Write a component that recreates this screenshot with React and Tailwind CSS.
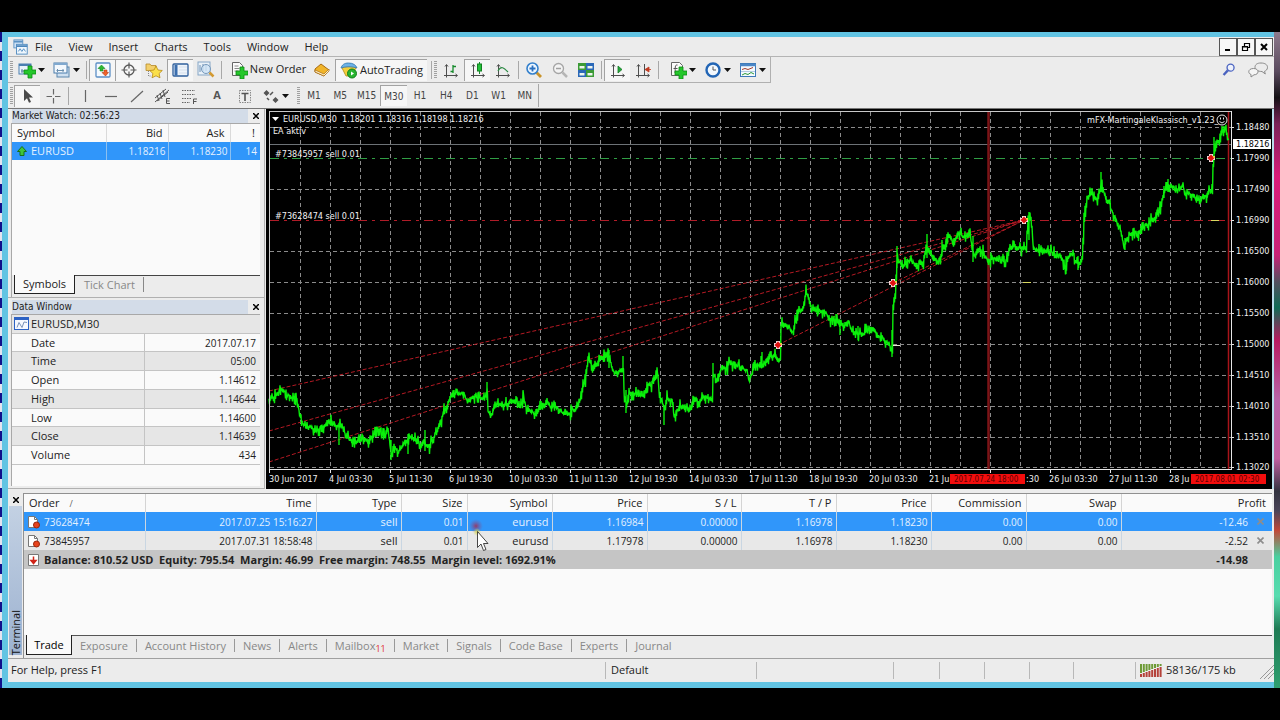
import React from "react";

/* ---------- price data ---------- */

const KEYS = [
  [269, 399], [276, 393], [282, 391], [287, 395], [293, 401], [297, 400], [299, 413], [302, 422], [308, 427], [318, 431],
  [330, 423], [338, 426], [342, 423], [345, 436], [353, 441], [360, 438], [368, 439], [377, 429], [383, 434], [388, 429],
  [391, 455], [394, 447], [398, 454], [402, 448], [408, 440], [415, 437], [422, 445], [430, 445], [433, 440], [438, 427],
  [443, 412], [450, 396], [455, 393], [463, 394], [468, 398], [480, 395], [485, 398], [487, 392], [488, 414], [491, 415],
  [495, 403], [505, 407], [513, 403], [522, 405], [523, 397], [527, 414], [535, 414], [542, 403], [550, 407], [560, 410],
  [565, 415], [572, 410], [578, 407], [580, 399], [585, 380], [588, 359], [592, 367], [597, 364], [600, 359], [605, 357],
  [608, 352], [612, 367], [615, 374], [621, 371], [623, 368], [624, 396], [626, 408], [628, 397], [637, 395], [643, 396],
  [647, 386], [653, 383], [657, 374], [659, 396], [662, 407], [665, 410], [667, 398], [672, 403], [674, 415], [680, 405],
  [688, 408], [700, 400], [703, 395], [712, 397], [713, 370], [717, 376], [722, 366], [733, 362], [740, 367], [746, 370],
  [749, 382], [753, 369], [762, 364], [770, 356], [775, 355], [780, 360], [781, 327], [785, 324], [793, 331], [798, 308],
  [802, 312], [806, 294], [812, 306], [823, 312], [835, 322], [840, 326], [848, 323], [853, 332], [863, 334], [868, 327],
  [875, 333], [880, 338], [887, 343], [890, 343], [892, 354], [893, 307], [895, 298], [897, 252], [898, 260], [903, 267],
  [910, 263], [917, 266], [923, 263], [926, 253], [928, 252], [938, 258], [943, 248], [948, 233], [953, 240], [960, 233],
  [963, 238], [970, 238], [973, 258], [978, 250], [983, 252], [990, 261], [997, 257], [1005, 260], [1010, 249], [1015, 243],
  [1020, 247], [1026, 248], [1028, 218], [1031, 222], [1033, 246], [1043, 251], [1053, 253], [1060, 258], [1065, 266],
  [1068, 256], [1073, 254], [1077, 264], [1082, 261], [1084, 221], [1087, 198], [1092, 191], [1097, 203], [1100, 191],
  [1101, 184], [1103, 190], [1108, 201], [1115, 218], [1120, 228], [1124, 246], [1130, 231], [1137, 235], [1145, 230],
  [1152, 223], [1160, 210], [1164, 195], [1168, 184], [1173, 188], [1182, 187], [1187, 195], [1193, 198], [1200, 200],
  [1207, 200], [1212, 188], [1213, 161], [1215, 143], [1218, 143], [1222, 132], [1225, 130], [1229, 143],
];

const SPIKES = [
  [339, 423, 445], [408, 434, 454], [487, 382, 400], [523, 394, 404], [425, 430, 451], [609, 350, 368], [623, 356, 372], [626, 390, 413],
  [664, 405, 425], [713, 363, 378], [762, 352, 368], [761, 356, 368], [892, 330, 357], [897, 246, 268], [927, 234, 258],
  [836, 314, 326], [840, 320, 335], [858, 326, 340], [942, 240, 256], [1029, 212, 240], [1101, 172, 192], [1066, 256, 274],
  [1078, 256, 270], [1164, 186, 198], [1168, 179, 192], [1214, 137, 160], [1125, 238, 250], [973, 236, 262], [391, 440, 460],
];

function buildSeries() {
  let seed = 11;
  const rnd = () => {
    seed = (seed * 1103515245 + 12345) % 2147483648;
    return seed / 2147483648;
  };
  const pts = [];
  let drift = 0;
  for (let i = 0; i < KEYS.length - 1; i++) {
    const [x0, y0] = KEYS[i];
    const [x1, y1] = KEYS[i + 1];
    for (let x = x0; x < x1; x++) {
      drift = drift * 0.7 + (rnd() - 0.5) * 4;
      const y = y0 + ((y1 - y0) * (x - x0)) / (x1 - x0) + drift;
      const up = 0.5 + rnd() ** 3 * 7;
      const down = 0.5 + rnd() ** 3 * 7;
      pts.push(`${x} ${(y - up).toFixed(1)}`, `${x + 0.5} ${(y + down).toFixed(1)}`);
    }
  }
  return "M" + pts.join("L") + SPIKES.map(([x, a, b]) => `M${x} ${a}V${b}`).join("");
}

const SERIES = buildSeries();
const range = (n) => Array.from({ length: n }, (_, i) => i);

const PRICES = ["1.18480", "1.17990", "1.17490", "1.16990", "1.16500", "1.16000", "1.15500", "1.15000", "1.14510", "1.14010", "1.13510", "1.13020"];
const DATES = [
  "30 Jun 2017", "4 Jul 03:30", "5 Jul 11:30", "6 Jul 19:30", "10 Jul 03:30", "11 Jul 11:30", "12 Jul 19:30", "14 Jul 03:30",
  "17 Jul 11:30", "18 Jul 19:30", "20 Jul 03:30", "21 Ju", "", "26 Jul 03:30", "27 Jul 11:30", "28 Ju",
];

function Marker({ x, y }) {
  return (
    <g>
      <path d={`M${x - 4} ${y - 2}h2v-2h4v2h2v4h-2v2h-4v-2h-2z`} fill="#f4dcdc" />
      <path d={`M${x - 3.5} ${y}l3.500 -3.500l3.500 3.500l-3.500 3.500z`} fill="#e01010" />
      <circle cx={x + 3} cy={y - 1} r="1" fill="#f3c020" />
    </g>
  );
}

function Chart() {
  return (
    <svg
      viewBox="266 109 1006 380"
      preserveAspectRatio="xMinYMin meet"
      className="block h-auto w-full font-['DejaVu_Sans_Condensed',sans-serif] text-[9px]"
      role="img"
      aria-label="EURUSD,M30"
    >
      <rect x="266" y="109" width="1006" height="380" fill="#000" />
      <g stroke="#8b8b8b" strokeWidth="1" strokeDasharray="4 3" shapeRendering="crispEdges">
        {range(31).map((i) => <path key={i} d={`M${300.5 + i * 30} 112V469`} />)}
        {range(12).map((i) => <path key={i} d={`M270 ${Math.round(127 + i * 30.95) + 0.5}H1231`} />)}
      </g>
      <path d="M270 144.500H1231" stroke="#6d7276" shapeRendering="crispEdges" />
      <path d="M270 158.500H1231" stroke="#000" strokeWidth="1" shapeRendering="crispEdges" />
      <path d="M270 158.500H1231" stroke="#2f9e44" strokeWidth="1" strokeDasharray="9 5 3 5" shapeRendering="crispEdges" />
      <path d="M270 220.500H1231" stroke="#000" strokeWidth="1" shapeRendering="crispEdges" />
      <path d="M270 220.500H1231" stroke="#b01c28" strokeWidth="1" strokeDasharray="9 5 3 5" shapeRendering="crispEdges" />
      <path d="M988.500 112V469" stroke="#7d1417" strokeWidth="2.500" />
      <path d="M1228.500 112V469" stroke="#a8141a" strokeWidth="1.500" />
      <g stroke="#b51a24" strokeWidth="1" strokeDasharray="4 2" fill="none">
        <path d="M269 391L1024 220" />
        <path d="M269 431L1024 220" />
        <path d="M269 462L1024 220" />
        <path d="M778 345L1024 220" />
        <path d="M893 283L1024 220" />
      </g>
      <path d={SERIES} stroke="#0af00a" strokeWidth="1.400" fill="none" />
      <path d="M1023 282.500h8M1211 220.500h8" stroke="#d8d860" />
      <path d="M893 345.500h7" stroke="#e8e8d0" />
      <Marker x={778} y={345} />
      <Marker x={893} y={283} />
      <Marker x={1024} y={220} />
      <Marker x={1211} y={158} />
      <path d="M269.500 469V111.500H1231.500" stroke="#c8c8c8" fill="none" shapeRendering="crispEdges" />
      <path d="M269 469.500H1231.500V111" stroke="#e6e6e6" fill="none" shapeRendering="crispEdges" />
      <path d="M272 117h7l-3.500 4z" fill="#fff" />
      <g fill="#f2f2f2">
        <text x="283" y="122" xmlSpace="preserve">EURUSD,M30  1.18201 1.18316 1.18198 1.18216</text>
        <text x="273" y="134">EA aktiv</text>
        <text x="275" y="157">#73845957 sell 0.01</text>
        <text x="275" y="219">#73628474 sell 0.01</text>
        <text x="1087" y="123">mFX-MartingaleKlassisch_v1.23_</text>
      </g>
      <g stroke="#e8e8e8" fill="none">
        <circle cx="1222" cy="120" r="5" />
        <path d="M1219.500 121.500q2.500 3 5 0" />
        <path d="M1220.500 117.500v2M1223.500 117.500v2" />
      </g>
      <g fill="#f0f0f0">
        {PRICES.map((p, i) => <text key={p} x="1236" y={Math.round(130 + i * 30.95)}>{p}</text>)}
      </g>
      <g stroke="#e6e6e6" shapeRendering="crispEdges">
        {range(12).map((i) => <path key={i} d={`M1231 ${Math.round(127 + i * 30.95) + 0.5}h3`} />)}
        {range(16).map((i) => <path key={i} d={`M${(i === 0 ? 269.5 : 270.5 + i * 60)} 469v4`} />)}
      </g>
      <rect x="1233" y="139" width="38" height="10" fill="#fff" />
      <text x="1236" y="147" fill="#000">1.18216</text>
      <g fill="#f0f0f0">
        {DATES.map((d, i) => d && <text key={d} x={269 + i * 60} y="482">{d}</text>)}
        <text x="1026" y="482">:30</text>
      </g>
      <rect x="950" y="474" width="75" height="10" fill="#f20d0d" />
      <rect x="1191" y="474" width="75" height="10" fill="#f20d0d" />
      <g fill="#5c0000" className="text-[8px]">
        <text x="954" y="482">2017.07.24 18:00</text>
        <text x="1195" y="482">2017.08.01 02:30</text>
      </g>
    </svg>
  );
}

/* ---------- icons ---------- */

function Icon({ children, w = 18, h = 18, box = "0 0 18 18" }) {
  return <svg width={w} height={h} viewBox={box} fill="none" aria-hidden="true" className="shrink-0">{children}</svg>;
}

const Plus = ({ x = 6, y = 6 }) => (
  <path d={`M${x + 4} ${y}h4v4h4v4h-4v4h-4v-4h-4v-4h4z`} fill="#25c72b" stroke="#0c8a14" strokeWidth="0.8" />
);
const Axes = () => <path d="M4.500 4v12.500M2 14.500h13M3 5.500l1.500-2l1.500 2M13.500 13l2 1.500l-2 1.500" stroke="#4d4d4d" />;

const icons = {
  app: (
    <Icon w={16} h={16}>
      <rect x="1" y="1" width="10" height="9" fill="#cfe2f5" stroke="#5c93c4" />
      <path d="M1 3h10" stroke="#5c93c4" strokeWidth="2" />
      <rect x="4" y="6" width="12" height="11" fill="#eef6fd" stroke="#4b87bd" />
      <path d="M4 8h12" stroke="#4b87bd" strokeWidth="2" />
      <path d="M6 14l2-3l2 3l2-3l2 3" stroke="#4b87bd" />
    </Icon>
  ),
  newChart: (
    <Icon>
      <rect x="1" y="3" width="12" height="10" fill="#e8f2fb" stroke="#4a7fb0" />
      <path d="M1 4h12" stroke="#4a7fb0" strokeWidth="2" />
      <path d="M3 10h3M4 8v4" stroke="#587ea0" />
      <Plus x={6} y={5} />
    </Icon>
  ),
  profiles: (
    <Icon>
      <rect x="4" y="6" width="12" height="10" fill="#cfe0f0" stroke="#5a86ad" />
      <rect x="1" y="2" width="13" height="10" fill="#f3f8fd" stroke="#4a7cab" />
      <path d="M1 3h13" stroke="#7fa8cf" strokeWidth="2" />
      <path d="M3.500 9.500h7.500M4.500 8v3M10 8v3" stroke="#6b8fae" />
    </Icon>
  ),
  market: (
    <Icon>
      <rect x="2" y="2" width="14" height="14" rx="1" fill="#f5faff" stroke="#5b8fc5" strokeWidth="1.300" />
      <path d="M4 7.500L7.500 4L11 7.500H9V10H6V7.500z" fill="#2fb832" stroke="#168a1c" strokeWidth=".6" />
      <path d="M8 11.500h2V9h3v2.500h1.500L11.500 15z" fill="#f0632a" stroke="#b43a10" strokeWidth=".6" />
    </Icon>
  ),
  target: (
    <Icon>
      <circle cx="9" cy="9" r="5" stroke="#5a5a5a" strokeWidth="1.300" />
      <path d="M9 1.500v6M9 10.500v6M1.500 9h6M10.500 9h6" stroke="#5a5a5a" strokeWidth="1.200" />
    </Icon>
  ),
  navigator: (
    <Icon>
      <path d="M1 3h4l1 1.500h5v5H1z" fill="#f3cf6b" stroke="#b58a2a" strokeWidth=".8" />
      <path d="M3.500 10v5h3" stroke="#888" strokeDasharray="1 1" />
      <path d="M11 5l2 4l4.300.500l-3.200 3l.9 4.300L11 14.800L7 16.800l.9-4.300l-3.200-3L9 9z" fill="#fbe04a" stroke="#b88a15" strokeWidth=".8" />
    </Icon>
  ),
  terminal: (
    <Icon>
      <rect x="1" y="3" width="15" height="12" rx="1" fill="#eef4fb" stroke="#2f5f9c" strokeWidth="1.300" />
      <path d="M4 4v10.500" stroke="#3b6eae" strokeWidth="3" />
      <path d="M7 6h8M7 9h8M7 12h8" stroke="#d5dfeb" />
    </Icon>
  ),
  tester: (
    <Icon>
      <rect x="1" y="1" width="12" height="13" fill="#e9f1f8" stroke="#86a6c6" />
      <path d="M3 4v7M6 3v8M9 4v6" stroke="#6a8fb5" />
      <circle cx="9" cy="8" r="4.500" fill="#cfe4f5" fillOpacity=".8" stroke="#7698bb" />
      <path d="M12.500 11.500l4 4" stroke="#d39a32" strokeWidth="2.500" />
    </Icon>
  ),
  order: (
    <Icon>
      <path d="M2.500 1.500h7l3 3v10h-10z" fill="#fbfbfb" stroke="#666" />
      <path d="M4.500 5h4M4.500 7.500h5M4.500 10h4" stroke="#888" />
      <Plus x={6} y={6} />
    </Icon>
  ),
  book: (
    <Icon>
      <path d="M2 8l6-5l8 6l-5 6l-9-4z" fill="#f0b429" stroke="#a86a10" />
      <path d="M2 9l9 4l5-5v2l-5 5l-9-4z" fill="#fff1c9" stroke="#a86a10" strokeWidth=".7" />
    </Icon>
  ),
  auto: (
    <Icon>
      <path d="M2 7c3-2 11-2 14 0l-5 8H6z" fill="#f3cf3c" stroke="#b08a18" strokeWidth=".8" />
      <path d="M1 7c1-3 3-5 7.500-5S16 4 17 7c-4-1.600-12-1.600-16 0z" fill="#6cb2e6" stroke="#3277ae" strokeWidth=".8" />
      <circle cx="12" cy="12.500" r="4.500" fill="#28b431" stroke="#128018" />
      <path d="M11 10.500v4l3-2z" fill="#fff" />
    </Icon>
  ),
  bars: <Icon><Axes /><path d="M11 4v8M11 5.500h3M8.500 10.500H11" stroke="#168a2c" strokeWidth="1.300" /></Icon>,
  candles: <Icon><Axes /><path d="M10.500 1v12" stroke="#168a2c" /><rect x="8.500" y="3" width="4" height="7" fill="#25c23a" stroke="#138022" /></Icon>,
  line: <Icon><Axes /><path d="M4 10c3-6 6-3 10 1" stroke="#2c8a44" strokeWidth="1.200" /></Icon>,
  zoomIn: (
    <Icon>
      <path d="M11.500 11.500l4.500 4.500" stroke="#c9932b" strokeWidth="2.800" />
      <circle cx="7.500" cy="7.500" r="5.500" fill="#eef7ff" stroke="#3480cc" strokeWidth="1.600" />
      <path d="M4.500 7.500h6M7.500 4.500v6" stroke="#2a70c0" strokeWidth="1.800" />
    </Icon>
  ),
  zoomOut: (
    <Icon>
      <path d="M11.500 11.500l4.500 4.500" stroke="#b5b5b5" strokeWidth="2.500" />
      <circle cx="7.500" cy="7.500" r="5" fill="#f3f3f3" stroke="#a5a5a5" strokeWidth="1.300" />
      <path d="M5 7.500h5" stroke="#a0a0a0" strokeWidth="1.500" />
    </Icon>
  ),
  tile: (
    <Icon>
      <rect x="1" y="2" width="8" height="7" fill="#3b9b36" /><rect x="9" y="2" width="8" height="7" fill="#2a68b8" />
      <rect x="1" y="9" width="8" height="7" fill="#2a68b8" /><rect x="9" y="9" width="8" height="7" fill="#3b9b36" />
      <path d="M2.500 5h5v2.500h-5zM10.500 5h5v2.500h-5zM2.500 12h5v2.500h-5zM10.500 12h5v2.500h-5z" fill="#eef5ee" />
    </Icon>
  ),
  scroll: <Icon><Axes /><path d="M9 5v7l4-3.500z" fill="#25a83a" stroke="#177a28" strokeWidth=".8" /></Icon>,
  shift: <Icon><Axes /><path d="M10.500 3v11" stroke="#4d4d4d" /><path d="M15 6v5l-4-2.500zM14 8.500h3" fill="#c23a20" stroke="#c23a20" strokeWidth=".8" /></Icon>,
  indicators: (
    <Icon>
      <path d="M2.500 1.500h8l3 3v10h-11z" fill="#fbfbfb" stroke="#666" />
      <path d="M8.500 4c-3-.5-2 3-2.500 8M4.500 7.500h4" stroke="#555" />
      <Plus x={6} y={6} />
    </Icon>
  ),
  clock: (
    <Icon>
      <circle cx="9" cy="9" r="6.500" fill="#f2f8fe" stroke="#2265b5" strokeWidth="2.400" />
      <path d="M9 5.500V9h3" stroke="#555" />
    </Icon>
  ),
  template: (
    <Icon>
      <rect x="1.500" y="2.500" width="15" height="13" fill="#f5faff" stroke="#3d79b8" />
      <path d="M1 4h16" stroke="#4a86c6" strokeWidth="2.500" />
      <path d="M3 8.500l3-1l3 1l5-2" stroke="#a23b2b" />
      <path d="M2 10.500h14" stroke="#9ab8d4" strokeWidth=".7" />
      <path d="M3 14l3-1.500l3 1l3-2l3 1.500" stroke="#2c9a3a" />
    </Icon>
  ),
  cursor: <Icon><path d="M5 2v12l3-2.800l2 4.600l2-.9l-2-4.500h4z" fill="#4a4a4a" /></Icon>,
  cross: <Icon><path d="M9.500 2v5.500M9.500 11v5.500M2.500 9.500H8M11 9.500h5.500" stroke="#666" strokeWidth="1.200" /></Icon>,
  vline: <Icon><path d="M9.500 3v12" stroke="#666" strokeWidth="1.200" /></Icon>,
  hline: <Icon><path d="M3 9.500h12" stroke="#666" strokeWidth="1.200" /></Icon>,
  trend: <Icon><path d="M3 15L15 4" stroke="#666" strokeWidth="1.200" /></Icon>,
  channel: (
    <Icon>
      <path d="M1 11L12 2M3 14L14 5M3 8l2 6M6 6l2 6M9 3l2 7M1 15L15 3" stroke="#555" />
      <path d="M16 11.500h-3.500v5H16M12.500 14h3" stroke="#555" />
    </Icon>
  ),
  fibo: (
    <Icon>
      <path d="M2 3.500h13M2 7.500h13M2 11.500h9M2 15.500h8" stroke="#666" strokeDasharray="1.500 1" />
      <path d="M13.500 17v-5H17M13.500 14.500h3" stroke="#555" />
    </Icon>
  ),
  label: (
    <Icon>
      <rect x="3.500" y="3.500" width="11" height="12" stroke="#888" strokeDasharray="1.500 1" />
      <path d="M5.500 6.500h7M9 6.500v7.500" stroke="#555" strokeWidth="1.600" />
    </Icon>
  ),
  arrows: (
    <Icon>
      <path d="M4.500 3l3 3l-3 3l-3-3zM13.500 10l3 3l-3 3l-3-3z" fill="#555" />
      <path d="M5 11l2 2M11 5l-3 3" stroke="#555" strokeWidth="1.500" />
    </Icon>
  ),
  search: (
    <Icon w={14} h={14}>
      <circle cx="11" cy="6" r="4.500" fill="#edf1fb" stroke="#4a63c0" strokeWidth="1.700" />
      <path d="M7.500 9.500L2 15.500" stroke="#4a63c0" strokeWidth="3" />
    </Icon>
  ),
  chat: (
    <Icon w={20} h={16} box="0 0 20 16">
      <path d="M13 1c4 0 6.500 1.800 6.500 4.300S17.500 9 16.500 9.300l.8 2.700l-3.300-2.500C10 9.500 7 8 7 5.300S9 1 13 1z" fill="#ececec" stroke="#8a8a8a" />
      <path d="M5.500 6.500C8.500 6.500 10 8 10 9.700S8.500 12.800 6 12.800L3 15v-2.600C1.500 12 .8 11 .8 9.700C.8 8 2.500 6.500 5.500 6.500z" fill="#f5f5f5" stroke="#8a8a8a" />
    </Icon>
  ),
  up: (
    <Icon w={10} h={10} box="0 0 10 10">
      <path d="M5 .5L9.500 5.500H7v4H3v-4H.5z" fill="#3fc63a" stroke="#17701a" />
    </Icon>
  ),
  dataChart: (
    <Icon w={15} h={13} box="0 0 15 13">
      <rect x=".5" y=".5" width="14" height="12" fill="#f5f8ff" stroke="#2c62c4" />
      <path d="M0 1.500h15" stroke="#2c62c4" strokeWidth="3" />
      <path d="M3 10.500l2-5l3 5l2-5.500l3 .5" stroke="#7a92b8" />
    </Icon>
  ),
  ticket: (
    <Icon w={14} h={14} box="0 0 14 14">
      <path d="M1.500 1.500h6l3 3v8h-9z" fill="#fff" stroke="#777" />
      <path d="M7.500 1.500v3h3" stroke="#777" />
      <circle cx="9.500" cy="10" r="3" fill="#e8431c" stroke="#9a260c" />
    </Icon>
  ),
  balance: (
    <Icon w={12} h={14} box="0 0 12 14">
      <path d="M.5 1.500h10v11H.5z" fill="#fff" stroke="#777" />
      <path d="M5.500 3.500v4M5.500 10.500L3 7.500h5z" fill="#d02418" stroke="#d02418" strokeWidth="1.500" />
    </Icon>
  ),
};

/* ---------- controls ---------- */

const Caret = () => <svg width="7" height="4" viewBox="0 0 7 4" aria-hidden="true"><path d="M0 0h7l-3.500 4z" fill="#111" /></svg>;

function Tool({ icon, label, pressed, drop, text, className = "" }) {
  const width = className || (drop ? "w-[35px]" : "w-[26px]");
  const skin = pressed ? "border-t border-l border-[#a3a3a3] bg-[#f6f6f6]" : "";
  return (
    <button type="button" aria-label={label} aria-pressed={pressed ? true : undefined} className={`flex h-[22px] shrink-0 items-center justify-center gap-[2px] ${width} ${skin}`}>
      {icon}
      {text}
      {drop && <Caret />}
    </button>
  );
}

const Sep = () => <span className="mx-[2px] h-[18px] w-px shrink-0 bg-[#a8a8a8]" />;
const Grip = () => (
  <svg width="4" height="18" viewBox="0 0 4 18" className="shrink-0" aria-hidden="true">
    {range(9).map((i) => <path key={i} d={`M0 ${i * 2 + 0.5}h3`} stroke="#a0a0a0" />)}
  </svg>
);

function WinButton({ label, children }) {
  return (
    <button type="button" aria-label={label} className="flex h-[18px] w-[18px] items-center justify-center border border-[#555] bg-[#f7f7f7]">
      <svg width="10" height="10" viewBox="0 0 10 10" fill="none" stroke="#000" aria-hidden="true">{children}</svg>
    </button>
  );
}

function MenuBar() {
  return (
    <div className="flex h-[20px] items-center border-b border-[#b4b4b4] pl-[5px]">
      {icons.app}
      <nav className="flex flex-1 items-center gap-4 pl-[6px]">
        {["File", "View", "Insert", "Charts", "Tools", "Window", "Help"].map((m) => <button key={m} type="button" className="leading-4">{m}</button>)}
      </nav>
      <div className="flex pr-px">
        <WinButton label="Minimize"><path d="M2 8h5" strokeWidth="2" /></WinButton>
        <WinButton label="Restore"><path d="M3.500 4V1.500h5v4H7M3 1.500h6M1.500 4.500h5v4h-5zM1 5h6" strokeWidth="1.200" /></WinButton>
        <WinButton label="Close"><path d="M2 2l6 6M8 2l-6 6" strokeWidth="2" /></WinButton>
      </div>
    </div>
  );
}

function MainToolbar() {
  return (
    <div className="flex h-[26px] items-center">
      <div className="flex h-[26px] items-center border-r border-b border-[#b0b0b0] pl-[2px]">
        <Grip />
        <Tool icon={icons.newChart} label="New chart" drop />
        <Tool icon={icons.profiles} label="Profiles" drop />
        <Sep />
        <Tool icon={icons.market} label="Market Watch" pressed />
        <Tool icon={icons.target} label="Data Window" pressed />
        <Tool icon={icons.navigator} label="Navigator" />
        <Tool icon={icons.terminal} label="Terminal" pressed />
        <Tool icon={icons.tester} label="Strategy Tester" />
        <Sep />
        <Tool icon={icons.order} text="New Order" className="ml-[3px] w-[82px]" />
        <Tool icon={icons.book} label="MetaEditor" />
        <Tool icon={icons.auto} text="AutoTrading" pressed className="mr-[2px] w-[92px]" />
        <Sep />
        <Grip />
        <Tool icon={icons.bars} label="Bar chart" />
        <Tool icon={icons.candles} label="Candlesticks" pressed />
        <Tool icon={icons.line} label="Line chart" />
        <Sep />
        <Tool icon={icons.zoomIn} label="Zoom in" />
        <Tool icon={icons.zoomOut} label="Zoom out" />
        <Tool icon={icons.tile} label="Tile windows" />
        <Sep />
        <Tool icon={icons.scroll} label="Auto scroll" pressed />
        <Tool icon={icons.shift} label="Chart shift" />
        <Sep />
        <div className="flex pl-1">
          <Tool icon={icons.indicators} label="Indicators" drop />
          <Tool icon={icons.clock} label="Periods" drop />
          <Tool icon={icons.template} label="Templates" drop />
        </div>
      </div>
      <div className="ml-auto flex items-center gap-3 pr-[6px]">
        <button type="button" aria-label="Search">{icons.search}</button>
        <button type="button" aria-label="Chat">{icons.chat}</button>
      </div>
    </div>
  );
}

function DrawToolbar() {
  return (
    <div className="flex h-[25px] items-center pl-[2px]">
      <Grip />
      <Tool icon={icons.cursor} label="Cursor" pressed />
      <Tool icon={icons.cross} label="Crosshair" />
      <Sep />
      <div className="flex pl-px">
        <Tool icon={icons.vline} label="Vertical line" />
        <Tool icon={icons.hline} label="Horizontal line" />
        <Tool icon={icons.trend} label="Trendline" />
        <Tool icon={icons.channel} label="Channel" />
        <Tool icon={icons.fibo} label="Fibonacci" />
        <Tool text={<span className="font-bold text-[#555]">A</span>} label="Text" className="w-[30px]" />
        <Tool icon={icons.label} label="Text label" />
        <Tool icon={icons.arrows} label="Arrows" drop />
      </div>
      <span className="w-1" />
      <Grip />
      <div className="flex h-[23px] w-[238px] items-center border-r border-[#a8a8a8] font-['DejaVu_Sans_Condensed',sans-serif] text-[10px] text-[#444]">
        {["M1", "M5", "M15", "M30", "H1", "H4", "D1", "W1", "MN"].map((p) => (
          <button key={p} type="button" aria-pressed={p === "M30"} className={p === "M30" ? "h-[21px] flex-1 basis-0 border-t border-l border-[#a3a3a3] bg-[#f6f6f6]" : "h-[21px] flex-1 basis-0"}>{p}</button>
        ))}
      </div>
    </div>
  );
}

function PanelTitle({ children }) {
  return (
    <div className="ml-[4px] flex h-[14px] items-center justify-between bg-[#d3dce8] font-['DejaVu_Sans_Condensed',sans-serif] text-[10px] leading-[14px] text-[#222]">
      <h2>{children}</h2>
      <button type="button" aria-label="Close" className="flex h-full w-[16px] items-center justify-center bg-[#ececec]">
        <svg width="6" height="6" viewBox="0 0 6 6" stroke="#000" strokeWidth="1.500" aria-hidden="true"><path d="M0 0l6 6M6 0l-6 6" /></svg>
      </button>
    </div>
  );
}

function MarketWatch() {
  return (
    <section className="flex h-[189px] flex-col border-b border-[#b0b0b0]">
      <PanelTitle>Market Watch: 02:56:23</PanelTitle>
      <div className="mr-1 ml-[3px] flex-1 border-t border-l border-[#a8a8a8] bg-[#fafafa]">
        <table className="w-full table-fixed border-collapse">
          <colgroup><col className="w-[94px]" /><col className="w-[62px]" /><col className="w-[62px]" /><col /></colgroup>
          <thead>
            <tr className="h-[18px] leading-4">
              <th className="border-r border-[#dadada] pl-[5px] text-left font-normal">Symbol</th>
              <th className="border-r border-[#dadada] pr-[5px] text-right font-normal">Bid</th>
              <th className="border-r border-[#dadada] pr-[5px] text-right font-normal">Ask</th>
              <th className="pr-[5px] text-right font-normal">!</th>
            </tr>
          </thead>
          <tbody>
            <tr className="h-[18px] bg-[#3096fa] leading-4 text-[#e4f1ff]">
              <td className="border-r border-[#8cc0f0] pl-[5px]"><span className="flex items-center gap-[4px]">{icons.up}EURUSD</span></td>
              <td className="border-r border-[#8cc0f0] pr-[2px] text-right text-[10px]">1.18216</td>
              <td className="border-r border-[#8cc0f0] pr-[2px] text-right text-[10px]">1.18230</td>
              <td className="pr-[3px] text-right text-[10px]">14</td>
            </tr>
          </tbody>
        </table>
      </div>
      <div role="tablist" className="mr-1 ml-[3px] flex h-[22px] items-start border-l border-[#a8a8a8] pl-[2px]">
        <button type="button" role="tab" aria-selected="true" className="h-[19px] w-[61px] border-r border-b border-l border-[#222] bg-[#fafafa] leading-4">Symbols</button>
        <button type="button" role="tab" aria-selected="false" className="h-[19px] flex-1 border-t border-[#444] pl-[9px] text-left leading-4 text-[#888]">
          <span className="border-r border-[#888] pr-2">Tick Chart</span>
        </button>
      </div>
    </section>
  );
}

const DATA = [["Date", "2017.07.17"], ["Time", "05:00"], ["Open", "1.14612"], ["High", "1.14644"], ["Low", "1.14600"], ["Close", "1.14639"], ["Volume", "434"]];

function DataWindow() {
  return (
    <section className="flex min-h-0 flex-1 flex-col border-b border-[#b0b0b0] pt-[2px]">
      <PanelTitle>Data Window</PanelTitle>
      <div className="mr-1 mb-[2px] ml-[3px] flex-1 border-t border-l border-[#a8a8a8] bg-[#fafafa]">
        <table className="h-[150px] w-full table-fixed border-collapse leading-4">
          <colgroup><col className="w-[132px]" /><col /></colgroup>
          <tbody>
            <tr className="border-b border-[#c4c4c4] bg-[#e6e6e6]">
              <th colSpan="2" className="pl-[2px] text-left font-normal"><span className="flex items-center gap-[2px]">{icons.dataChart}EURUSD,M30</span></th>
            </tr>
            {DATA.map(([k, v], i) => (
              <tr key={k} className={i % 2 ? "border-b border-[#c4c4c4] bg-[#e6e6e6]" : "border-b border-[#c4c4c4]"}>
                <th className="border-r border-[#c4c4c4] pl-[19px] text-left font-normal">{k}</th>
                <td className="pr-[4px] text-right text-[10px]">{v}</td>
              </tr>
            ))}
          </tbody>
        </table>
      </div>
    </section>
  );
}

const COLS = ["Order", "Time", "Type", "Size", "Symbol", "Price", "S / L", "T / P", "Price", "Commission", "Swap", "Profit"];
const ORDERS = [
  ["73628474", "2017.07.25 15:16:27", "sell", "0.01", "eurusd", "1.16984", "0.00000", "1.16978", "1.18230", "0.00", "0.00", "-12.46"],
  ["73845957", "2017.07.31 18:58:48", "sell", "0.01", "eurusd", "1.17978", "0.00000", "1.16978", "1.18230", "0.00", "0.00", "-2.52"],
];

function CloseX() {
  return <svg width="7" height="7" viewBox="0 0 7 7" stroke="#8d8d8d" strokeWidth="1.600" aria-hidden="true"><path d="M.5.5l6 6M6.500.5l-6 6" /></svg>;
}

function TradeTable() {
  return (
    <table className="w-full table-fixed border-collapse">
      <colgroup>
        <col className="w-[121px]" /><col className="w-[171px]" /><col className="w-[85px]" /><col className="w-[66px]" />
        <col className="w-[85px]" /><col className="w-[95px]" /><col className="w-[94px]" /><col className="w-[95px]" />
        <col className="w-[95px]" /><col className="w-[95px]" /><col className="w-[95px]" /><col />
      </colgroup>
      <thead>
        <tr className="h-[18px] leading-4">
          {COLS.map((c, i) => (
            <th key={i} className={i === 0 ? "border-r border-[#d4d4d4] pl-[5px] text-left font-normal" : i === 11 ? "pr-[6px] text-right font-normal" : "border-r border-[#d4d4d4] pr-[4px] text-right font-normal"}>
              {c}{i === 0 && <span className="pl-[10px] text-[9px] text-[#666]">/</span>}
            </th>
          ))}
        </tr>
      </thead>
      <tbody>
        {ORDERS.map((row, r) => (
          <tr key={r} className={r === 0 ? "h-[19px] bg-[#3096fa] leading-4 text-[#e4f1ff]" : "h-[19px] bg-[#e8e8e8] leading-4"}>
            {row.map((v, i) => {
              if (i === 0) return <td key={i} className="border-r border-[#c9d6e2] pl-[3px] text-[10px]"><span className="flex items-center gap-[3px]">{icons.ticket}{v}</span></td>;
              if (i === 11) return (
                <td key={i} className="pr-[8px] text-[10px]">
                  <span className="flex items-center justify-end gap-[9px]">{v}<button type="button" aria-label="Close order"><CloseX /></button></span>
                </td>
              );
              const size = i === 2 || i === 4 ? "text-[11px]" : "text-[10px]";
              return <td key={i} className={`border-r border-[#c9d6e2] pr-[3px] text-right ${size}`}>{v}</td>;
            })}
          </tr>
        ))}
        <tr className="h-[19px] bg-[#c5c5c5] leading-4 font-bold">
          <td colSpan="11" className="pl-[4px]">
            <span className="flex items-center gap-[4px] whitespace-pre">{icons.balance}{"Balance: 810.52 USD  Equity: 795.54  Margin: 46.99  Free margin: 748.55  Margin level: 1692.91%"}</span>
          </td>
          <td className="pr-[24px] text-right">-14.98</td>
        </tr>
      </tbody>
    </table>
  );
}

const TABS = ["Exposure", "Account History", "News", "Alerts", "Mailbox", "Market", "Signals", "Code Base", "Experts", "Journal"];

function Pointer() {
  return (
    <svg width="22" height="34" viewBox="0 0 22 34" className="pointer-events-none absolute top-[30px] left-[460px]" aria-hidden="true">
      <defs>
        <radialGradient id="click"><stop offset="0" stopColor="#a03058" stopOpacity=".9" /><stop offset="1" stopColor="#7058a0" stopOpacity="0" /></radialGradient>
        <radialGradient id="glow"><stop offset="0" stopColor="#d8d850" stopOpacity=".9" /><stop offset="1" stopColor="#d8d850" stopOpacity="0" /></radialGradient>
      </defs>
      <circle cx="8" cy="7" r="7" fill="url(#click)" />
      <circle cx="9" cy="13" r="4" fill="url(#glow)" />
      <path d="M9.500 12.500v16l3.500-3.500l2.500 6.500l2.500-1l-2.500-6h4.500z" fill="#fff" stroke="#333" strokeWidth=".9" />
    </svg>
  );
}

function Terminal() {
  return (
    <section className="relative flex h-[170px] border-b border-[#a0a0a0] pt-[4px]">
      <div className="mx-px flex w-[13px] flex-col items-center">
        <button type="button" aria-label="Close terminal" className="flex h-[13px] items-center">
          <svg width="6" height="6" viewBox="0 0 6 6" stroke="#000" strokeWidth="1.500" aria-hidden="true"><path d="M0 0l6 6M6 0l-6 6" /></svg>
        </button>
        <div className="mb-[3px] flex w-full flex-1 flex-col items-center justify-end bg-gradient-to-b from-[#c3d1e3] to-[#9db2d0] text-[#111]">
          <h2 className="rotate-180 leading-[13px] [writing-mode:vertical-rl]">Terminal</h2>
        </div>
      </div>
      <div className="mr-[2px] flex min-w-0 flex-1 flex-col border-t border-l border-[#909090]">
        <div className="flex-1 bg-[#fafafa]"><TradeTable /></div>
        <div role="tablist" className="flex h-[23px] items-start text-[#888]">
          <button type="button" role="tab" aria-selected="true" className="ml-[2px] h-[20px] w-[46px] border-r border-b border-l border-[#222] bg-[#fafafa] leading-[20px] text-black">Trade</button>
          <div className="flex h-[20px] flex-1 items-center border-t border-[#555]">
            {TABS.map((t) => (
              <button key={t} type="button" role="tab" aria-selected="false" className={t === "Journal" ? "px-[8px] leading-[13px]" : "border-r border-[#999] px-[8px] leading-[13px]"}>
                {t}{t === "Mailbox" && <sub className="text-[9px] text-[#e03030]">11</sub>}
              </button>
            ))}
          </div>
        </div>
      </div>
      <Pointer />
    </section>
  );
}

function StatusBar() {
  return (
    <footer className="flex flex-1 items-center">
      <span className="flex-1 pl-[3px]">For Help, press F1</span>
      <span className="flex h-[17px] w-[151px] items-center border-l border-[#b8b8b8] pl-[5px]">Default</span>
      {["w-[137px]", "w-[46px]", "w-[45px]", "w-[45px]", "w-[44px]", "w-[62px]"].map((w, i) => (
        <span key={i} className={`h-[17px] border-l border-[#b8b8b8] ${w}`} />
      ))}
      <span className="flex h-[17px] w-[139px] items-center gap-[4px] border-l border-[#b8b8b8] pl-[4px]">
        <svg width="22" height="13" viewBox="0 0 22 13" aria-hidden="true">
          {range(8).map((i) => (
            <g key={i}>
              <rect x={i * 2.8} y="0" width="2" height={9 - i} fill="#6d9a35" />
              <rect x={i * 2.8} y={10 - i} width="2" height={3 + i} fill="#b5423a" />
            </g>
          ))}
        </svg>
        58136/175 kb
        <svg width="14" height="14" viewBox="0 0 14 14" className="ml-auto self-end" aria-hidden="true">
          <path d="M0 14L14 0M4 14L14 4M8 14l6-6" stroke="#999" fill="none" />
        </svg>
      </span>
    </footer>
  );
}

export default function App() {
  return (
    <div className="flex h-screen flex-col overflow-hidden bg-black font-['Open_Sans','Noto_Sans',sans-serif] text-[11px] text-[#222]">
      <div className="h-8 shrink-0" />
      <div className="flex min-h-0 flex-1">
        <div className="w-[2px] bg-[repeating-linear-gradient(to_bottom,#10108a_0_10px,#e4e4f0_10px_19px)]" />
        <main className="flex min-w-0 flex-1 flex-col border-t-[5px] border-b-[6px] border-l-[6px] border-[#62c4e3] bg-[#ececec]">
          <MenuBar />
          <MainToolbar />
          <DrawToolbar />
          <div className="flex h-[381px] border-t border-[#777]">
            <div className="flex w-[257px] shrink-0 flex-col border-r border-[#b0b0b0]">
              <MarketWatch />
              <DataWindow />
            </div>
            <div className="ml-px min-w-0 flex-1 overflow-hidden bg-black"><Chart /></div>
            <div className="w-[2px] bg-[#b8dcea]" />
          </div>
          <Terminal />
          <StatusBar />
        </main>
        <div className="w-[6px] bg-[linear-gradient(to_bottom,#8d7a8c_0%,#5a4a5e_6%,#141014_10%,#7a2358_14%,#d81b7a_22%,#c82277_34%,#555060_38%,#0f6b55_42%,#b81a60_47%,#b864a8_56%,#c060a0_65%,#333340_70%,#4a4458_73%,#c04838_76%,#4ad0a0_80%,#58dcb0_86%,#1f7a54_91%,#2fa070_100%)]" />
      </div>
      <div className="h-8 shrink-0" />
    </div>
  );
}
